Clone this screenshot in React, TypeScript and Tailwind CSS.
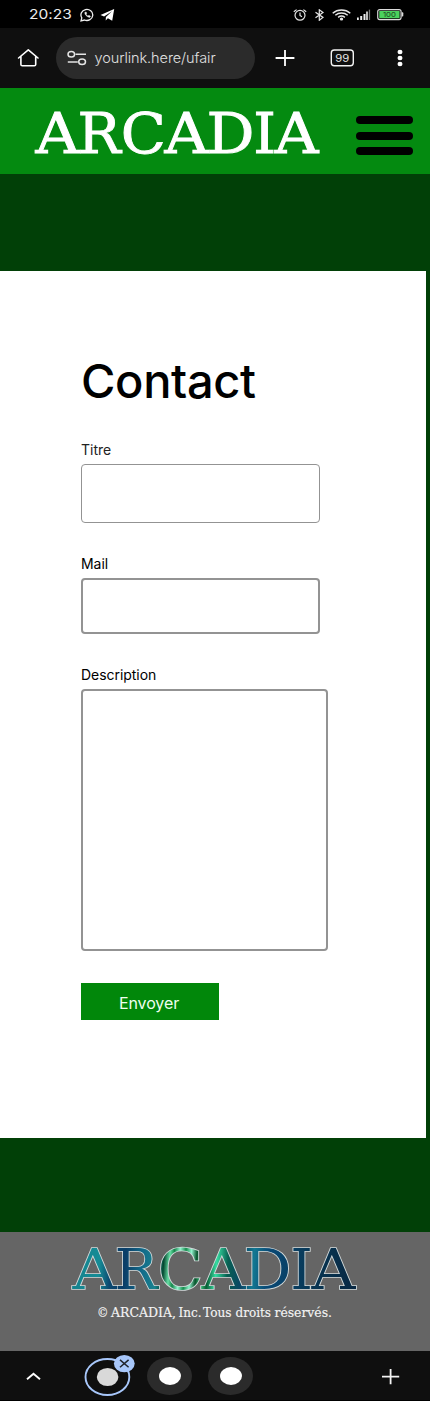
import React from "react";

function StatusBar() {
  return (
    <div className="flex h-7 items-center bg-black text-[#ececec]">
      <span className="ml-[29px] w-[51px] origin-left scale-x-[1.19] whitespace-nowrap font-['Inter',sans-serif] text-[13px] leading-4 tracking-[0.05px]">20:23</span>
      <svg className="mt-[2px] h-[14px] w-[15px] shrink-0" viewBox="0 0 15 14" fill="none" stroke="#eeeeee" strokeWidth="1.3">
        <path d="M1 12.8 1.8 9.8A5.9 5.5 0 1 1 4.5 12Z" />
        <path d="M4.9 4.2c-.7 2 2.1 5 4.9 5.2l.7-1.2-1.6-.9-.9.7c-1-.4-1.6-1-1.9-1.8l.7-.7-.6-1.5Z" fill="#eeeeee" strokeWidth=".4" />
      </svg>
      <svg className="ml-[5px] mt-[2px] h-[12px] w-[15px] shrink-0" viewBox="0 0 15 12" fill="#ffffff">
        <path d="M14.2.1.5 6l3.6 1.4L12 2.2 5.9 8l-.2 3.5 2.2-2.2 4.3 2.5Z" />
      </svg>
      <div className="ml-[178px] mt-px flex items-center">
        <svg className="h-3 w-[14px] shrink-0" viewBox="0 0 14 12" fill="none" stroke="#e6e6e6" strokeWidth="1.2">
          <ellipse cx="7" cy="6.3" rx="5" ry="4.9" />
          <path d="M7 3.5v3l2 1.2M.8 2.8 3.6.6M13.2 2.8 10.4.6" />
        </svg>
        <svg className="ml-[7px] h-3 w-[11px] shrink-0" viewBox="0 0 11 12" fill="none" stroke="#e6e6e6" strokeWidth="1.2">
          <path d="M1.5 3.2 9 8.4 5.3 11.3V.8L9 3.6 1.5 8.8" />
        </svg>
        <svg className="ml-[7px] h-3 w-[19px] shrink-0" viewBox="0 0 19 12" fill="none" stroke="#e8e8e8" strokeWidth="1.45">
          <path d="M.7 4.2C5.6-.1 13.4-.1 18.3 4.2M3.3 6.3c3.6-3 8.8-3 12.4 0M6.1 8.3c2.1-1.6 4.7-1.6 6.8 0" />
          <ellipse cx="9.5" cy="9.9" rx="1.7" ry="1.5" fill="#e8e8e8" stroke="none" />
        </svg>
        <svg className="ml-[6px] h-3 w-[14px] shrink-0" viewBox="0 0 14 12" fill="#ededed">
          <path d="M0 8.6h1.8V11H0zM3.2 7h2v4h-2zM6.5 5h2v6h-2zM9.2 2.6h1.6V11H9.2z" />
          <path d="M11.8.6h1.3V11h-1.3z" fill="#777777" />
        </svg>
        <svg className="ml-[6px] h-[13px] w-[27px] shrink-0" viewBox="0 0 27 13">
          <rect x=".7" y="1.6" width="23.4" height="10" rx="2" fill="#111" stroke="#dcdcdc" strokeWidth="1.1" />
          <rect x="2.3" y="3" width="20.2" height="7.2" fill="#4bd15d" />
          <path d="M24.7 4.2h1q.6.2.6 1v2.4q0 .8-.6 1h-1z" fill="#dcdcdc" />
          <text x="12.4" y="9" textAnchor="middle" fontFamily="Inter, sans-serif" fontSize="6.4" fill="#173b1b" textLength="13" lengthAdjust="spacingAndGlyphs">100</text>
        </svg>
      </div>
    </div>
  );
}

function BrowserBar() {
  return (
    <div className="flex h-[60px] items-center bg-[#0f0f0f]">
      <svg className="ml-[17px] h-5 w-[22px] shrink-0" viewBox="0 0 22 20" fill="none" stroke="#ffffff" strokeWidth="1.6" strokeLinejoin="round" strokeLinecap="round">
        <path d="M1.6 10 11.3 1.9 21 10M3.9 8.6v7.9q0 1.3 1.4 1.3h12q1.4 0 1.4-1.3V8.6" />
      </svg>
      <div className="ml-[17px] flex h-[42px] w-[199px] items-center rounded-full bg-[#2b2b2b]">
        <svg className="ml-[11px] h-4 w-5 shrink-0" viewBox="0 0 20 16" fill="none" stroke="#e4e4e4" strokeWidth="1.5">
          <ellipse cx="4.3" cy="4.2" rx="3.3" ry="2.8" />
          <path d="M8.5 4.2H19M.8 12h10" />
          <ellipse cx="15.1" cy="11.8" rx="3.4" ry="2.8" />
        </svg>
        <span className="ml-[7.5px] mb-px font-['Inter',sans-serif] text-[14.5px] font-light leading-5 tracking-[-0.08px] text-[#e0e0e0]">yourlink.here/ufair</span>
      </div>
      <svg className="ml-[20px] h-[18px] w-5 shrink-0" viewBox="0 0 20 18" stroke="#ffffff" strokeWidth="1.8">
        <path d="M.6 9h18.8M10 1v16" />
      </svg>
      <svg className="ml-[35px] h-[18px] w-6 shrink-0" viewBox="0 0 24 18">
        <rect x="1.3" y="1" width="22" height="15.8" rx="3" fill="none" stroke="#f3f3f3" strokeWidth="1.4" />
        <text x="12.3" y="12.8" textAnchor="middle" fontFamily="Inter, sans-serif" fontSize="10.4" fill="#e3e3e3" textLength="14" lengthAdjust="spacingAndGlyphs">99</text>
      </svg>
      <svg className="ml-[43px] h-[18px] w-[6px] shrink-0" viewBox="0 0 6 18" fill="#ffffff">
        <ellipse cx="3" cy="3" rx="2.5" ry="2.2" />
        <ellipse cx="3" cy="9" rx="2.5" ry="2.2" />
        <ellipse cx="3" cy="15" rx="2.5" ry="2.2" />
      </svg>
    </div>
  );
}

const letters = [
  { glyph: "A", x: 5.6, width: 44 },
  { glyph: "R", x: 47.5, width: 43.2 },
  { glyph: "C", x: 90.7, width: 45.2 },
  { glyph: "A", x: 134.6, width: 44 },
  { glyph: "D", x: 176.4, width: 48 },
  { glyph: "I", x: 223.3, width: 22.7 },
  { glyph: "A", x: 244.6, width: 44 },
];

function Wordmark({ fill, stroke, strokeWidth }: { fill: string; stroke: string; strokeWidth: number }) {
  return (
    <text y="56" fontFamily="'DejaVu Serif', serif" fontSize="56" fill={fill} stroke={stroke} strokeWidth={strokeWidth}>
      {letters.map((letter) => (
        <tspan key={letter.x} x={letter.x} textLength={letter.width} lengthAdjust="spacingAndGlyphs">{letter.glyph}</tspan>
      ))}
    </text>
  );
}

function Header() {
  return (
    <header className="flex h-[86px] bg-[#048a10]">
      <svg className="ml-[30px] mt-[9px] h-[74px] w-[296px] shrink-0" viewBox="0 0 296 74" role="img">
        <Wordmark fill="#ffffff" stroke="#ffffff" strokeWidth={0.9} />
      </svg>
      <button className="ml-[30px] mt-[28px] flex h-[39px] w-[57px] flex-col justify-between">
        <span className="h-2 w-full rounded-full bg-black" />
        <span className="h-2 w-full rounded-full bg-black" />
        <span className="h-2 w-full rounded-full bg-black" />
      </button>
    </header>
  );
}

function ContactForm() {
  return (
    <main className="mt-[97px] flex h-[867px] w-[426px] flex-col items-start bg-white pl-[81px] font-['Inter',sans-serif] text-black">
      <h1 className="mt-[81px] text-[47px] font-medium leading-[58px] tracking-[-0.35px]">Contact</h1>
      <label className="mt-[31px] text-[14px] leading-[18px] text-[#222222]">Titre</label>
      <input className="mt-[5px] h-[59px] w-[239px] rounded-[4px] border border-[#939393] outline-none" />
      <label className="mt-[32px] text-[14px] leading-[18px] tracking-[-0.05px]">Mail</label>
      <input className="mt-[5px] h-[56px] w-[239px] rounded-[4px] border-2 border-[#939393] outline-none" />
      <label className="mt-[32px] text-[14px] leading-[18px] tracking-[-0.05px]">Description</label>
      <textarea className="mt-[5px] h-[262px] w-[247px] resize-none rounded-[4px] border-2 border-[#939393] outline-none" />
      <button className="mt-[32px] h-[37px] w-[138px] bg-[#01870a] pr-[2px] pt-[3px] text-[16px] leading-5 tracking-[-0.1px] text-[#f0fff0]">Envoyer</button>
    </main>
  );
}

function Footer() {
  return (
    <footer className="mt-[94px] flex h-[119px] flex-col items-start bg-[#656565]">
      <svg className="ml-[67px] mt-px h-[70px] w-[296px] shrink-0" viewBox="0 0 296 70" role="img">
        <defs>
          <linearGradient id="aurora" x1="5" y1="14" x2="289" y2="34" gradientUnits="userSpaceOnUse">
            <stop offset="0" stopColor="#16818c" />
            <stop offset=".1" stopColor="#168c96" />
            <stop offset=".14" stopColor="#0b4870" />
            <stop offset=".19" stopColor="#0b3e68" />
            <stop offset=".25" stopColor="#126b8a" />
            <stop offset=".3" stopColor="#19838f" />
            <stop offset=".325" stopColor="#054a31" />
            <stop offset=".345" stopColor="#66dfa5" />
            <stop offset=".36" stopColor="#16864b" />
            <stop offset=".38" stopColor="#92f3cd" />
            <stop offset=".4" stopColor="#168c4d" />
            <stop offset=".42" stopColor="#92f3cd" />
            <stop offset=".44" stopColor="#09532d" />
            <stop offset=".46" stopColor="#43c984" />
            <stop offset=".48" stopColor="#075c34" />
            <stop offset=".51" stopColor="#35dba0" />
            <stop offset=".55" stopColor="#086052" />
            <stop offset=".6" stopColor="#0a4665" />
            <stop offset=".64" stopColor="#127892" />
            <stop offset=".69" stopColor="#094a77" />
            <stop offset=".85" stopColor="#083653" />
            <stop offset="1" stopColor="#082843" />
          </linearGradient>
        </defs>
        <Wordmark fill="url(#aurora)" stroke="#d3dadb" strokeWidth={1.7} />
        <Wordmark fill="url(#aurora)" stroke="none" strokeWidth={0} />
      </svg>
      <svg className="ml-[96px] mt-px h-[20px] w-[240px] shrink-0" viewBox="0 0 240 20">
        <text y="13" fontFamily="'DejaVu Serif', serif" fontSize="12" fill="#f4f4f4" stroke="#f4f4f4" strokeWidth=".15">
          <tspan x="1" textLength="11.5" lengthAdjust="spacingAndGlyphs">©</tspan>
          <tspan x="15" textLength="65" lengthAdjust="spacingAndGlyphs">ARCADIA,</tspan>
          <tspan x="82.5" textLength="23" lengthAdjust="spacingAndGlyphs">Inc.</tspan>
          <tspan x="107" textLength="28.5" lengthAdjust="spacingAndGlyphs">Tous</tspan>
          <tspan x="139.5" textLength="35.5" lengthAdjust="spacingAndGlyphs">droits</tspan>
          <tspan x="178.5" textLength="57.5" lengthAdjust="spacingAndGlyphs">réservés.</tspan>
        </text>
      </svg>
    </footer>
  );
}

function TabBar() {
  return (
    <div className="flex h-[50px] items-start border-b border-black bg-[#0f0f0f]">
      <svg className="ml-[26px] mt-[20px] h-[10px] w-[15px] shrink-0" viewBox="0 0 15 10" fill="none" stroke="#ffffff" strokeWidth="1.9">
        <path d="M1 8.2 7.5 2.8 14 8.2" />
      </svg>
      <svg className="ml-[43px] mt-[3px] h-[43px] w-[52px] shrink-0" viewBox="0 0 52 43">
        <ellipse cx="23.4" cy="23" rx="21.9" ry="18" fill="none" stroke="#a8c7fa" strokeWidth="1.9" />
        <ellipse cx="23.6" cy="23" rx="10.8" ry="9.1" fill="#d9d9d9" />
        <ellipse cx="40.3" cy="9.6" rx="10.4" ry="8.6" fill="#a8c7fa" />
        <path d="m36 5.9 8.6 7.4m0-7.4L36 13.3" stroke="#20242b" strokeWidth="1.5" />
      </svg>
      <div className="ml-[11px] mt-[6px] flex h-[38px] w-[45px] items-center justify-center rounded-[50%] bg-[#2b2b2b]">
        <span className="h-[18px] w-[22px] rounded-[50%] bg-white" />
      </div>
      <div className="ml-[16px] mt-[6px] flex h-[38px] w-[45px] items-center justify-center rounded-[50%] bg-[#2b2b2b]">
        <span className="h-[18px] w-[22px] rounded-[50%] bg-white" />
      </div>
      <svg className="ml-[128px] mt-[17px] h-[17px] w-[19px] shrink-0" viewBox="0 0 19 17" stroke="#f4f4f4" strokeWidth="1.8">
        <path d="M1 8.7h17.2M9.6 1v15.2" />
      </svg>
    </div>
  );
}

export default function App() {
  return (
    <div className="flex h-[1401px] w-[430px] flex-col overflow-hidden bg-[#014007]">
      <StatusBar />
      <BrowserBar />
      <Header />
      <ContactForm />
      <Footer />
      <TabBar />
    </div>
  );
}
